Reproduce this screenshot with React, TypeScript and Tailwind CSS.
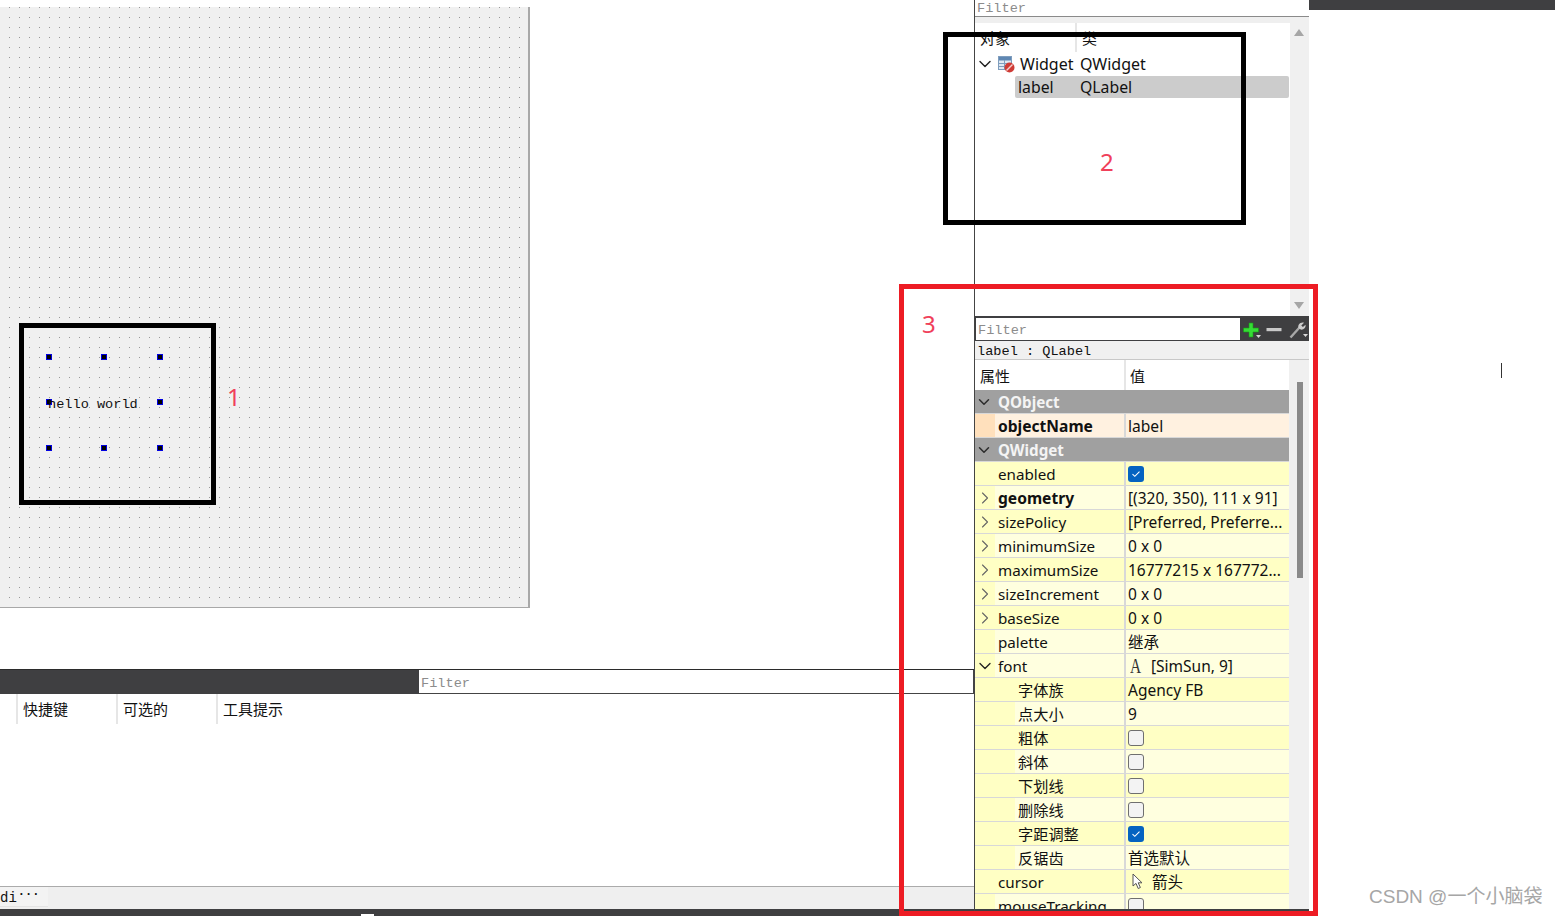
import { ChevronDown, ChevronRight } from 'lucide-react'

const uiFont = "font-['Noto_Sans','Noto_Sans_CJK_SC',sans-serif]"
const monoFont = "font-['Liberation_Mono','Noto_Sans_CJK_SC',monospace]"

type PropRow = {
  name: string
  value?: string
  bold?: boolean
  indent?: boolean
  arrow?: 'right' | 'down'
  check?: boolean
  icon?: 'font' | 'cursor'
  dark?: boolean
}

const qwidgetRows: PropRow[] = [
  { name: 'enabled', check: true, dark: true },
  { name: 'geometry', value: '[(320, 350), 111 x 91]', bold: true, arrow: 'right' },
  { name: 'sizePolicy', value: '[Preferred, Preferre...', arrow: 'right', dark: true },
  { name: 'minimumSize', value: '0 x 0', arrow: 'right' },
  { name: 'maximumSize', value: '16777215 x 167772...', arrow: 'right', dark: true },
  { name: 'sizeIncrement', value: '0 x 0', arrow: 'right' },
  { name: 'baseSize', value: '0 x 0', arrow: 'right', dark: true },
  { name: 'palette', value: '继承' },
  { name: 'font', value: '[SimSun, 9]', arrow: 'down', icon: 'font' },
  { name: '字体族', value: 'Agency FB', indent: true, dark: true },
  { name: '点大小', value: '9', indent: true },
  { name: '粗体', check: false, indent: true, dark: true },
  { name: '斜体', check: false, indent: true },
  { name: '下划线', check: false, indent: true, dark: true },
  { name: '删除线', check: false, indent: true },
  { name: '字距调整', check: true, indent: true, dark: true },
  { name: '反锯齿', value: '首选默认', indent: true },
  { name: 'cursor', value: '箭头', icon: 'cursor', dark: true },
  { name: 'mouseTracking', check: false },
]

function CheckBox({ checked }: { checked: boolean }) {
  if (checked) {
    return (
      <span className="flex h-4 w-4 items-center justify-center rounded-[3px] bg-[#0563c1]">
        <svg width="10" height="8" viewBox="0 0 10 8" fill="none">
          <path d="M1.5 4.2 3.800 6.300 8.500 1.600" stroke="#fff" strokeWidth="1.1" />
        </svg>
      </span>
    )
  }
  return <span className="h-4 w-4 rounded-[3px] border border-[#6f6f6f] bg-[#f3f3f3]" />
}

function Row({ row }: { row: PropRow }) {
  const rowBg = row.dark ? 'bg-[#ffffc4]' : 'bg-[#ffffdf]'
  return (
    <div className={`flex h-6 shrink-0 border-b border-[#d8d8d8] text-[15.2px] leading-[25px] text-[#111] ${rowBg}`}>
      <div className={`flex items-center justify-center bg-[#ffffc4] ${row.indent ? 'w-10' : 'w-5'}`}>
        {row.arrow === 'right' && <ChevronRight size={20} strokeWidth={1.3} className="text-[#666]" />}
        {row.arrow === 'down' && <ChevronDown size={20} strokeWidth={1.6} className="text-[#222]" />}
      </div>
      <div className={`${row.indent ? 'w-[109px]' : 'w-[129px]'} ${row.bold ? 'text-[15.6px] font-bold' : ''} overflow-hidden pl-[3px] whitespace-nowrap`}>
        {row.name}
      </div>
      <div className="flex flex-1 items-center border-l-2 border-[#d8d8d8] pl-[2px] text-[15.5px]">
        {row.check !== undefined && <CheckBox checked={row.check} />}
        {row.icon === 'font' && (
          <span className="mr-[10px] ml-[2px] inline-block w-[11px] origin-left scale-x-[0.7] font-['Liberation_Serif',serif] text-[22px] leading-none text-[#333]">
            A
          </span>
        )}
        {row.icon === 'cursor' && (
          <svg className="mr-[9px] ml-[4px]" width="11" height="17" viewBox="0 0 11 17" fill="#fff">
            <path d="M1 1v12l3-2.600L6.200 15.500l2.200-1-2.200-4.700h3.800z" stroke="#555" strokeWidth="1" />
          </svg>
        )}
        {row.value && <span className="mt-[2px] whitespace-nowrap">{row.value}</span>}
      </div>
    </div>
  )
}

function GroupRow({ name }: { name: string }) {
  return (
    <div className="flex h-6 shrink-0 items-center border-b border-[#d8d8d8] bg-[#a0a0a0] text-[15.2px] font-bold text-[#f4f4f4]">
      <div className="flex w-[23px] items-center">
        <ChevronDown size={18} strokeWidth={2} className="text-[#2b2b2b]" />
      </div>
      <span className="mt-[2px]">{name}</span>
    </div>
  )
}

function Handle({ className }: { className: string }) {
  return <span className={`absolute h-[6px] w-[6px] border border-[#0000e0] bg-black ${className}`} />
}

function ScrollArrow({ up }: { up?: boolean }) {
  return (
    <svg width="10" height="7" viewBox="0 0 10 7" fill="#a6a6a6">
      <path d={up ? 'M5 0l5 7H0z' : 'M0 0h10L5 7z'} />
    </svg>
  )
}

export default function App() {
  return (
    <div className={`relative flex h-[916px] w-[1555px] overflow-hidden bg-white ${uiFont}`}>
      {/* form editor and action list */}
      <div className="flex h-full w-[974px] shrink-0 flex-col">
        <div className="h-[7px] shrink-0" />
        <div className="relative h-[601px] w-[530px] shrink-0 border-r-2 border-b border-[#a8a8a8] bg-[#f0f0f0] bg-[radial-gradient(circle_at_0.5px_0.5px,#999999_0.65px,transparent_0.75px)] bg-[size:10px_10px] bg-[position:9px_0px]">
          <Handle className="top-[347px] left-[46px]" />
          <Handle className="top-[347px] left-[101px]" />
          <Handle className="top-[347px] left-[157px]" />
          <Handle className="top-[392px] left-[46px]" />
          <Handle className="top-[392px] left-[157px]" />
          <Handle className="top-[438px] left-[46px]" />
          <Handle className="top-[438px] left-[101px]" />
          <Handle className="top-[438px] left-[157px]" />
          <span className={`absolute top-[389px] left-[48px] text-[13.6px] leading-[18px] whitespace-nowrap text-[#111] ${monoFont}`}>
            hello world
          </span>
        </div>
        <div className="h-[61px] shrink-0" />
        <div className="flex h-[25px] shrink-0 justify-end border-t border-[#2b2b2b] bg-[#3f3f41]">
          <div className={`h-[24px] w-[555px] border-r border-b border-[#444] bg-white pl-[2px] text-[13.6px] leading-[28px] text-[#8c8c8c] ${monoFont}`}>
            Filter
          </div>
        </div>
        <div className="flex h-[30px] shrink-0 text-[15px] leading-[30px] text-[#111]">
          <div className="w-[18px] border-r-2 border-[#e6e6e6]" />
          <div className="w-[100px] border-r-2 border-[#e6e6e6] pl-[5px]">快捷键</div>
          <div className="w-[100px] border-r-2 border-[#e6e6e6] pl-[5px]">可选的</div>
          <div className="pl-[5px]">工具提示</div>
        </div>
        <div className="flex-1" />
        <div className="flex h-[23px] shrink-0 border-t border-[#ababab] bg-[#efefef]">
          <div className={`flex h-5 w-12 items-center border-b border-[#e4e4e4] bg-[#f3f3f3] pt-[3px] text-[14px] text-[#111] ${monoFont}`}>
            di<span className="-mt-[6px] ml-[1px] text-[12px] font-bold">···</span>
          </div>
        </div>
        <div className="flex h-[7px] shrink-0 items-end bg-[#3f3f41]">
          <div className="ml-[361px] h-[2px] w-[13px] bg-white" />
        </div>
      </div>

      {/* object inspector and property editor */}
      <div className="flex h-full w-[335px] shrink-0 flex-col border-l border-[#444]">
        <div className={`h-[17px] shrink-0 border-b border-[#8a8a8a] pl-[2px] text-[13.6px] leading-[17px] text-[#8c8c8c] ${monoFont}`}>
          Filter
        </div>
        <div className="flex h-[299px] shrink-0">
          <div className="flex-1">
            <div className="h-[6px] bg-[#efefef]" />
            <div className="flex h-[29px] text-[15px] leading-[31px] text-[#111]">
              <div className="w-[102px] border-r-2 border-[#e6e6e6] pl-[5px]">对象</div>
              <div className="pl-[5px]">类</div>
            </div>
            <div className="flex h-6 items-center text-[16px] text-[#111]">
              <ChevronDown size={20} strokeWidth={1.7} className="text-[#222]" />
              <svg className="mr-[5px] ml-[3px]" width="17" height="17" viewBox="0 0 17 17">
                <rect x="0.5" y="0.500" width="13" height="13" fill="#dfe8f2" stroke="#7f9dbd" />
                <rect x="1" y="1" width="12" height="3.500" fill="#5f87b3" />
                <path d="M1 7.500h12M1 10.500h12M6.500 4v9" stroke="#7f9dbd" />
                <circle cx="11.500" cy="11.500" r="5" fill="#cf3b35" />
                <path d="M8.500 14.500l6-6" stroke="#f4d0ce" strokeWidth="1.400" />
              </svg>
              <span className="w-[60px]">Widget</span>
              <span>QWidget</span>
            </div>
            <div className="mr-px ml-10 flex h-[22px] items-center rounded-[2px] bg-[#cccccc] pt-[2px] text-[15.8px] text-[#111]">
              <span className="w-[65px] pl-[3px]">label</span>
              <span>QLabel</span>
            </div>
          </div>
          <div className="flex w-[19px] flex-col items-center justify-between bg-[#f0f0f0] pt-[12px] pr-px pb-[7px]">
            <ScrollArrow up />
            <ScrollArrow />
          </div>
        </div>
        <div className="flex h-[25px] shrink-0 border-t-2 border-[#3f3f41] bg-[#3f3f41]">
          <div className={`ml-px h-[22px] w-[264px] bg-white pl-[2px] text-[13.6px] leading-[26px] text-[#8c8c8c] ${monoFont}`}>
            Filter
          </div>
          <div className="flex items-center gap-[4px] pl-[3px]">
            <svg width="19" height="18" viewBox="0 0 19 18">
              <path d="M6 2h4v5h5.500v4H10v5H6v-5H.500V7H6z" fill="#35dc35" stroke="#149c14" strokeWidth="0.600" />
              <path d="M13 14h5l-2.500 3z" fill="#d8d8d8" />
            </svg>
            <svg width="16" height="16" viewBox="0 0 16 16">
              <rect x="0.500" y="6" width="15" height="3.200" fill="#c9c9c9" />
            </svg>
            <svg className="ml-[3px]" width="20" height="18" viewBox="0 0 20 18" fill="none">
              <path d="M1.500 16.500 10.500 6.500" stroke="#a8a8a8" strokeWidth="2.400" />
              <path d="M9.500 7c-1-3 1.800-6.400 5.500-5.300L12.300 4.400l1.600 1.700 2.600-2.400c.7 3.300-3 6-5.200 4.600z" fill="#cccccc" />
              <path d="M14 13h5l-2.500 3z" fill="#d8d8d8" />
            </svg>
          </div>
        </div>
        <div className={`flex h-[19px] shrink-0 border-b border-[#c8c8c8] bg-[#f0f0f0] pl-[2px] text-[13.6px] leading-[22px] whitespace-pre text-[#111] ${monoFont}`}>
          label : QLabel
        </div>
        <div className="flex min-h-0 flex-1">
          <div className="flex w-[314px] flex-col overflow-hidden">
            <div className="flex h-[30px] shrink-0 text-[15px] leading-[32px] text-[#111]">
              <div className="w-[149px] pl-[5px]">属性</div>
              <div className="border-l-2 border-[#e6e6e6] pl-[4px]">值</div>
            </div>
            <GroupRow name="QObject" />
            <div className="flex h-6 shrink-0 border-b border-[#d8d8d8] bg-[#fff1e0] text-[15.6px] leading-[25px] text-[#111]">
              <div className="w-5 bg-[#ffe0bc]" />
              <div className="w-[129px] pl-[3px] font-bold">objectName</div>
              <div className="flex-1 border-l-2 border-[#d8d8d8] pl-[2px]">label</div>
            </div>
            <GroupRow name="QWidget" />
            {qwidgetRows.map(row => (
              <Row key={row.name} row={row} />
            ))}
          </div>
          <div className="flex-1 bg-[#f0f0f0] pt-[22px] pl-[8px]">
            <div className="h-[196px] w-[6px] bg-[#8a8a8a]" />
          </div>
        </div>
        <div className="h-[7px] shrink-0 bg-[#3f3f41]" />
      </div>

      <div className="flex-1">
        <div className="h-[10px] bg-[#3f3f41]" />
      </div>

      {/* annotations drawn over the screenshot */}
      <div className="absolute top-[323px] left-[19px] h-[182px] w-[197px] border-[5px] border-black" />
      <div className="absolute top-[32px] left-[943px] h-[193px] w-[303px] border-[5px] border-black" />
      <div className="absolute top-[284px] left-[899px] h-[632px] w-[419px] border-[5px] border-[#ed1c24]" />
      <span className="absolute top-[380px] left-[227px] text-[24px] leading-[34px] text-[#f0405a]">1</span>
      <span className="absolute top-[145px] left-[1100px] text-[24px] leading-[34px] text-[#f0405a]">2</span>
      <span className="absolute top-[307px] left-[922px] text-[24px] leading-[34px] text-[#f0405a]">3</span>
      <div className="absolute top-[363px] left-[1501px] h-[15px] w-px bg-[#333]" />
      <span className="absolute top-[883px] left-[1369px] font-['Liberation_Sans','Noto_Sans_CJK_SC',sans-serif] text-[19px] leading-[28px] whitespace-nowrap text-[#a6a6a6]">
        CSDN @一个小脑袋
      </span>
    </div>
  )
}
